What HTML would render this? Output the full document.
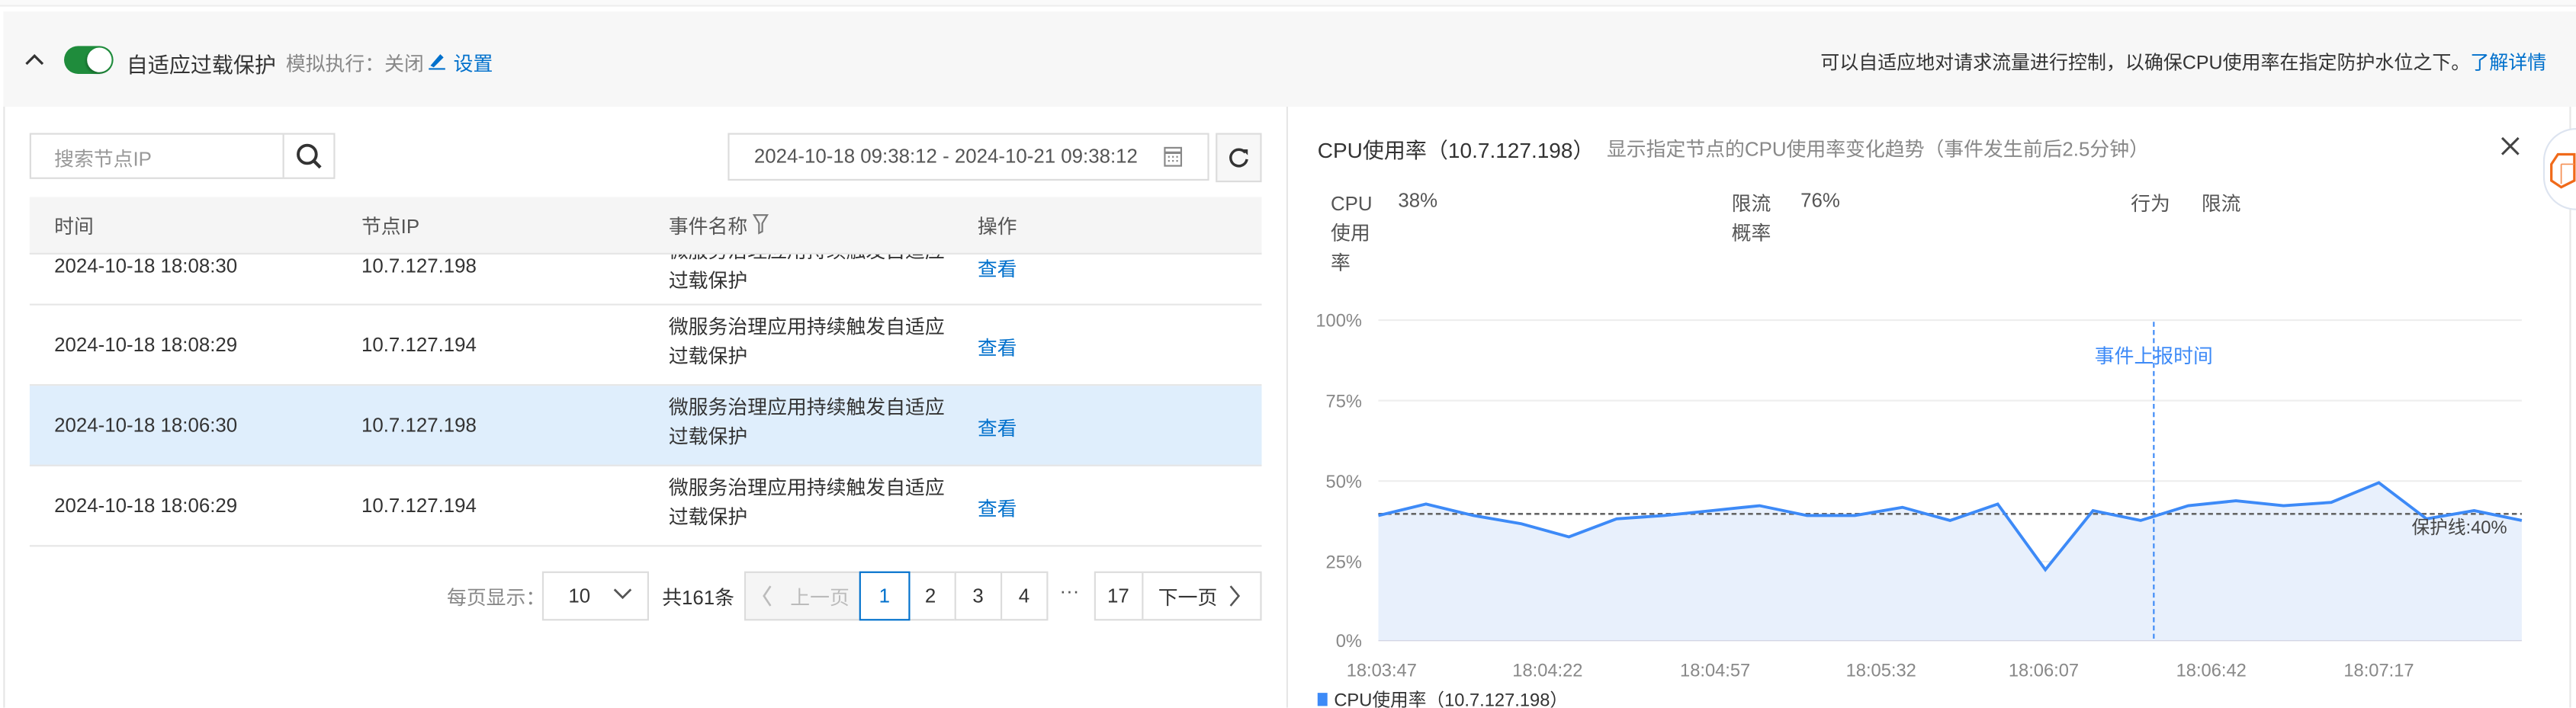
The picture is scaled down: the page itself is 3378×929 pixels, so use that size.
<!DOCTYPE html>
<html><head><meta charset="utf-8"><style>
*{box-sizing:border-box;margin:0;padding:0}
html,body{width:3378px;height:928px;overflow:hidden;background:#fff}
#s{position:absolute;left:0;top:0;width:1568px;height:431px;transform:scale(2.15434);transform-origin:0 0;font-family:"Liberation Sans","Noto Sans CJK SC",sans-serif;font-size:12px;color:#333}
.a{position:absolute;white-space:nowrap}
.blue{color:#0070cc}
.g{color:#888}
.box{position:absolute;border:1px solid #dcdcdc;background:#fff}
</style></head><body><div id="s">
<div class="a" style="left:0;top:0;width:1568px;height:4px;background:#fafafa;border-bottom:1px solid #eee"></div>
<div class="a" style="left:2px;top:7px;width:1566px;height:58px;background:#f7f7f7"></div>
<svg class="a" style="left:14px;top:31px" width="14" height="10"><path d="M2 8 L7 3 L12 8" stroke="#333" stroke-width="1.5" fill="none"/></svg>
<div class="a" style="left:39px;top:28px;width:30px;height:17px;border-radius:9px;background:#1f8c3c"></div>
<div class="a" style="left:53px;top:29px;width:15px;height:15px;border-radius:8px;background:#fff;box-shadow:-1px 1px 1px rgba(0,0,0,.2)"></div>
<div class="a" style="left:77px;top:29px;font-size:13px;color:#333">自适应过载保护</div>
<div class="a g" style="left:174px;top:30px">模拟执行：关闭</div>
<svg class="a" style="left:260px;top:31px" width="12" height="12"><path d="M2 9 L8 2 L10 4 L4 10 Z" fill="#0070cc"/><path d="M1 11 H11" stroke="#0070cc"/></svg>
<div class="a blue" style="left:276px;top:30px">设置</div>
<div class="a" style="right:18px;top:30px;color:#333;font-size:11.6px">可以自适应地对请求流量进行控制，以确保CPU使用率在指定防护水位之下。<span class="blue">了解详情</span></div>

<!-- left panel -->
<div class="a" style="left:2px;top:65px;width:1px;height:366px;background:#e6e6e6"></div>
<div class="box" style="left:18px;top:81px;width:186px;height:28px"></div>
<div class="a" style="left:172px;top:82px;width:1px;height:26px;background:#dcdcdc"></div>
<div class="a" style="left:33px;top:88px;color:#999">搜索节点IP</div>
<svg class="a" style="left:179px;top:86px" width="18" height="18"><circle cx="8" cy="8" r="5.5" stroke="#333" stroke-width="1.8" fill="none"/><path d="M12 12 L16 16" stroke="#333" stroke-width="2"/></svg>
<div class="box" style="left:443px;top:81px;width:293px;height:29px"></div>
<div class="a" style="left:459px;top:88px;color:#555">2024-10-18 09:38:12 - 2024-10-21 09:38:12</div>
<svg class="a" style="left:708px;top:88px" width="12" height="14"><rect x="1" y="2" width="10" height="11" fill="none" stroke="#888"/><path d="M1 5 H11" stroke="#888" stroke-width="1.5"/><path d="M3 7.5h1M5.5 7.5h1M8 7.5h1M3 10h1M5.5 10h1M8 10h1" stroke="#888"/></svg>
<div class="box" style="left:740px;top:81px;width:28px;height:30px;background:#f7f7f7"></div>
<svg class="a" style="left:746px;top:88px" width="16" height="16"><path d="M12 5 A5 5 0 1 0 13 9" stroke="#333" stroke-width="1.6" fill="none"/><path d="M10 3 L13.5 3 L13.5 6.5 Z" fill="#333"/></svg>

<div class="a" style="left:18px;top:120px;width:750px;height:35px;background:#f5f5f5;border-bottom:1px solid #e6e6e6"></div>
<div class="a" style="left:33px;top:129px;color:#555">时间</div>
<div class="a" style="left:220px;top:129px;color:#555">节点IP</div>
<div class="a" style="left:407px;top:129px;color:#555">事件名称</div>
<svg class="a" style="left:458px;top:130px" width="10" height="13"><path d="M1 1 H9 L6 6 V11 L4 12 V6 Z" fill="none" stroke="#777"/></svg>
<div class="a" style="left:595px;top:129px;color:#555">操作</div>

<div class="a" style="left:18px;top:155px;width:750px;height:180px;overflow:hidden">
 <div class="a" style="left:0;top:-18px;width:750px;height:49px;border-bottom:1px solid #e6e6e6"></div>
 <div class="a" style="left:0;top:31px;width:750px;height:49px;border-bottom:1px solid #e6e6e6"></div>
 <div class="a" style="left:0;top:80px;width:750px;height:49px;background:#dfeefc;border-bottom:1px solid #e6e6e6"></div>
 <div class="a" style="left:0;top:129px;width:750px;height:49px;border-bottom:1px solid #e6e6e6"></div>
 <div class="a" style="left:15px;top:0px">2024-10-18 18:08:30</div><div class="a" style="left:202px;top:0px">10.7.127.198</div>
 <div class="a" style="left:389px;top:-11px;line-height:18px">微服务治理应用持续触发自适应<br>过载保护</div><div class="a blue" style="left:577px;top:0px">查看</div>
 <div class="a" style="left:15px;top:48px">2024-10-18 18:08:29</div><div class="a" style="left:202px;top:48px">10.7.127.194</div>
 <div class="a" style="left:389px;top:35px;line-height:18px">微服务治理应用持续触发自适应<br>过载保护</div><div class="a blue" style="left:577px;top:48px">查看</div>
 <div class="a" style="left:15px;top:97px">2024-10-18 18:06:30</div><div class="a" style="left:202px;top:97px">10.7.127.198</div>
 <div class="a" style="left:389px;top:84px;line-height:18px">微服务治理应用持续触发自适应<br>过载保护</div><div class="a blue" style="left:577px;top:97px">查看</div>
 <div class="a" style="left:15px;top:146px">2024-10-18 18:06:29</div><div class="a" style="left:202px;top:146px">10.7.127.194</div>
 <div class="a" style="left:389px;top:133px;line-height:18px">微服务治理应用持续触发自适应<br>过载保护</div><div class="a blue" style="left:577px;top:146px">查看</div>
</div>

<div class="a g" style="left:272px;top:355px">每页显示：</div>
<div class="box" style="left:330px;top:348px;width:65px;height:30px"></div>
<div class="a" style="left:346px;top:356px">10</div>
<svg class="a" style="left:372px;top:357px" width="14" height="10"><path d="M2 2 L7 7 L12 2" stroke="#555" stroke-width="1.3" fill="none"/></svg>
<div class="a" style="left:403px;top:355px">共161条</div>
<div class="box" style="left:453px;top:348px;width:71px;height:30px;background:#f5f5f5"></div>
<svg class="a" style="left:463px;top:355px" width="8" height="16"><path d="M6 2 L2 8 L6 14" stroke="#bbb" stroke-width="1.2" fill="none"/></svg>
<div class="a" style="left:481px;top:355px;color:#bbb">上一页</div>
<div class="box" style="left:553px;top:348px;width:29px;height:30px"></div>
<div class="box" style="left:581px;top:348px;width:29px;height:30px"></div>
<div class="box" style="left:609px;top:348px;width:29px;height:30px"></div>
<div class="box" style="left:523px;top:348px;width:31px;height:30px;border:1.5px solid #0070cc"></div>
<div class="a blue" style="left:535px;top:356px">1</div>
<div class="a" style="left:563px;top:356px">2</div>
<div class="a" style="left:592px;top:356px">3</div>
<div class="a" style="left:620px;top:356px">4</div>
<div class="a" style="left:645px;top:353px;color:#555">···</div>
<div class="box" style="left:666px;top:348px;width:102px;height:30px"></div>
<div class="a" style="left:695px;top:349px;width:1px;height:28px;background:#dcdcdc"></div>
<div class="a" style="left:674px;top:356px">17</div>
<div class="a" style="left:705px;top:355px">下一页</div>
<svg class="a" style="left:746px;top:355px" width="10" height="16"><path d="M3 2 L8 8 L3 14" stroke="#555" stroke-width="1.2" fill="none"/></svg>

<!-- right panel -->
<div class="a" style="left:783px;top:65px;width:1px;height:366px;background:#e6e6e6"></div>
<div class="a" style="left:1564px;top:65px;width:1px;height:366px;background:#e6e6e6"></div>
<div class="a" style="left:802px;top:81px;font-size:13px;color:#333">CPU使用率（10.7.127.198）</div>
<div class="a g" style="left:978px;top:82px">显示指定节点的CPU使用率变化趋势（事件发生前后2.5分钟）</div>
<svg class="a" style="left:1522px;top:83px" width="12" height="12"><path d="M1 1 L11 11 M11 1 L1 11" stroke="#444" stroke-width="1.4"/></svg>
<div class="a" style="left:1548px;top:78px;width:40px;height:50px;border-radius:25px;background:#fff;border:1px solid #dde4f0"></div>
<svg class="a" style="left:1551px;top:92px" width="17" height="24"><path d="M6 2 L16 2 L16 18 L8 22 L2 18 L2 8 Z" fill="none" stroke="#f06a1a" stroke-width="1.5"/><path d="M8 8 L16 8 M8 8 L8 20" stroke="#f59055" stroke-width=".8"/></svg>

<div class="a" style="left:810px;top:115px;line-height:18px;color:#555">CPU<br>使用<br>率</div>
<div class="a" style="left:851px;top:115px;color:#555">38%</div>
<div class="a" style="left:1054px;top:115px;line-height:18px;color:#555">限流<br>概率</div>
<div class="a" style="left:1096px;top:115px;color:#555">76%</div>
<div class="a" style="left:1297px;top:115px;color:#555">行为</div>
<div class="a" style="left:1340px;top:115px;color:#555">限流</div>

<svg class="a" style="left:0;top:0" width="1568" height="431" font-family="Liberation Sans,Noto Sans CJK SC,sans-serif" font-size="11">
<g stroke="#eee"><path d="M839 195H1535M839 244H1535M839 293H1535M839 342H1535"/></g>
<path d="M839 390H1535" stroke="#ccd"/>
<g fill="#888" text-anchor="end"><text x="829" y="199">100%</text><text x="829" y="248">75%</text><text x="829" y="297">50%</text><text x="829" y="346">25%</text><text x="829" y="394">0%</text></g>
<path d="M839 314L868 307L897 314L926 319L955 327L984 316L1013 314L1042 311L1071 308L1100 314L1129 314L1158 309L1187 317L1216 307L1245 347L1274 311L1303 317L1332 308L1361 305L1390 308L1419 306L1448 294L1477 316L1506 311L1535 317L1535 390L839 390Z" fill="#e8f0fc"/>
<path d="M839 313H1535" stroke="#666" stroke-dasharray="3 2" stroke-width="1.2"/>
<path d="M839 314L868 307L897 314L926 319L955 327L984 316L1013 314L1042 311L1071 308L1100 314L1129 314L1158 309L1187 317L1216 307L1245 347L1274 311L1303 317L1332 308L1361 305L1390 308L1419 306L1448 294L1477 316L1506 311L1535 317" fill="none" stroke="#3d8af7" stroke-width="1.8"/>
<path d="M1311 196V390" stroke="#3d8af7" stroke-dasharray="3 2"/>
<text x="1311" y="221" fill="#3d8af7" text-anchor="middle" font-size="12">事件上报时间</text>
<text x="1526" y="325" fill="#444" text-anchor="end">保护线:40%</text>
<g fill="#888" text-anchor="middle"><text x="841" y="412">18:03:47</text><text x="942" y="412">18:04:22</text><text x="1044" y="412">18:04:57</text><text x="1145" y="412">18:05:32</text><text x="1244" y="412">18:06:07</text><text x="1346" y="412">18:06:42</text><text x="1448" y="412">18:07:17</text></g>
<rect x="802" y="422" width="6" height="8" fill="#3d8af7"/>
<text x="812" y="430" fill="#333">CPU使用率（10.7.127.198）</text>
</svg>
</div></body></html>
